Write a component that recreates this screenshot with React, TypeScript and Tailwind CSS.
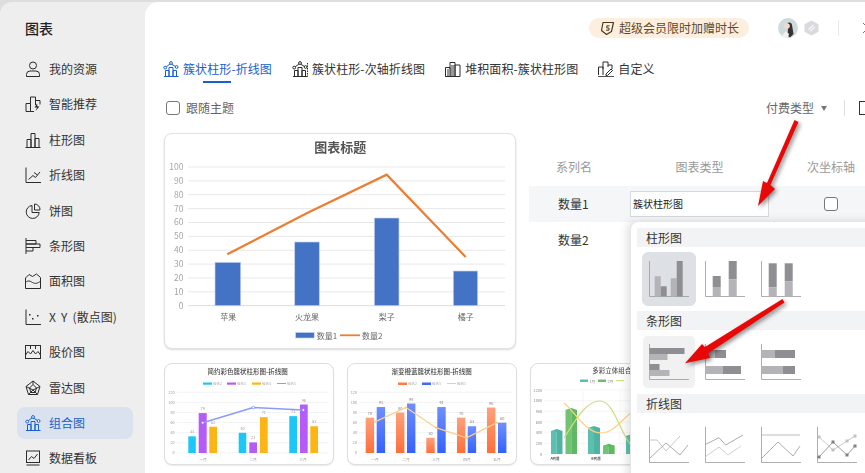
import React from "react";

const FONT = '"Noto Sans CJK SC", "Noto Sans", sans-serif';

function Ic({ children, className = "text-[#2b2b2b]" }: { children: React.ReactNode; className?: string }) {
  return (
    <svg width="16" height="16" viewBox="0 0 16 16" fill="none" stroke="currentColor" strokeWidth="1" className={`shrink-0 ${className}`}>
      {children}
    </svg>
  );
}

const Combo = () => (
  <>
    <path d="M1 15.5H15.5M2.5 15.5V9.5H6V15.5M6 15.5V6.5H10V15.5M10 15.5V9.5H13.5V15.5" />
    <path d="M3 6L7.5 2.5L12.5 5.5" />
    <circle cx="2.2" cy="6.6" r="1.4" fill="white" />
    <circle cx="8" cy="2" r="1.4" fill="white" />
    <circle cx="13.6" cy="6" r="1.4" fill="white" />
  </>
);

const navItems: { label: string; icon: React.ReactNode }[] = [
  { label: "我的资源", icon: <><circle cx="8" cy="4.5" r="3.5" /><path d="M1.5 15.5V13.5A3.5 3.5 0 0 1 5 10H11A3.5 3.5 0 0 1 14.500 13.500V15.500Z" /></> },
  { label: "智能推荐", icon: <><path d="M1 15.500V7.500H5.500V15.500ZM5.500 7.500V1H10.500V9M10.500 4.500H15V8.500" /><path d="M12 7.500L9.500 11.500H12L10.500 15L14.500 10.500H12.500Z" fill="#2b2b2b" stroke="none" /><path d="M5.500 15.500H9" /></> },
  { label: "柱形图", icon: <path d="M0.500 15.500H15.500M2 15.500V7.500H6V15.500M6 15.500V1.500H10V15.500M10 15.500V6.500H14V15.500" /> },
  { label: "折线图", icon: <><path d="M1 0.500V15.500H16" /><path d="M3.500 12.500L8 8.500L10.500 10.500L15 5M9 5.500L12.500 8" /></> },
  { label: "饼图", icon: <><path d="M7 2.500A6.500 6.500 0 1 0 14.200 9.500H7Z" /><path d="M9.500 1A5.500 5.500 0 0 1 15 7H9.500Z" /></> },
  { label: "条形图", icon: <path d="M1 0V16M1 2.500H11V6H1M1 6H15V9.500H1M1 9.500H8V13H1" /> },
  { label: "面积图", icon: <><path d="M0.500 5L4 1.500L7.500 3.500L11.500 1L15.500 4.500V15.500H0.500Z" /><path d="M0.500 9.500C3 7 5 8 7.500 9.500C10 11 13 10.500 15.500 8" /></> },
  { label: "X Y (散点图)", icon: <><path d="M1 0.500V15.500H16" /><rect x="4" y="5" width="1.500" height="1.500" fill="currentColor" stroke="none" /><rect x="7" y="9" width="1.500" height="1.500" fill="currentColor" stroke="none" /><rect x="12" y="6" width="1.500" height="1.500" fill="currentColor" stroke="none" /></> },
  { label: "股价图", icon: <><rect x="0.500" y="1.500" width="15" height="13" /><path d="M5.500 1.500V5M10.500 1.500V5M0.500 11L3 7.500L5.500 10L8 6.500L10.500 10L13 7.500L15.500 11" /></> },
  { label: "雷达图", icon: <path d="M8 1L15 6.500L12.500 14.500H3.500L1 6.500ZM8 4.500L11.500 8L10 12.500H6L4.500 8ZM8 1V4.500M1 6.500L8 10L15 6.500M3.500 14.500L8 10L12.500 14.500" /> },
  { label: "组合图", icon: <Combo /> },
  { label: "数据看板", icon: <><rect x="1.500" y="1" width="13" height="11.500" /><path d="M3.500 10L6.500 6.500L9 8.500L12.500 4M1.500 15H14.500" /></> },
];

function Sidebar() {
  return (
    <aside className="w-[145px] shrink-0 flex flex-col">
      <div className="h-[49.300px] shrink-0 pl-[25px] pt-[16px] text-[14px] leading-[20px] font-medium text-[#222]">图表</div>
      {navItems.map((n) => {
        const active = n.label === "组合图";
        return (
          <div key={n.label} className="h-[35.400px] ml-[17px] mr-[12px] py-[1.700px] shrink-0">
            <div className={`h-full flex items-center gap-[8px] pl-[8px] rounded-[8px] text-[12px] ${active ? "bg-[#d9e2ee] text-[#1a5fd0]" : "text-[#333]"}`}>
              <Ic className={active ? "text-[#1a5fd0]" : "text-[#2b2b2b]"}>{n.icon}</Ic>
              <span className="whitespace-nowrap [word-spacing:2.5px]">{n.label}</span>
            </div>
          </div>
        );
      })}
    </aside>
  );
}

function MainChart() {
  const ys = [100, 90, 80, 70, 60, 50, 40, 30, 20, 10, 0];
  const Y = (v: number) => 172.700 - v * 1.387;
  const bars = [[51, 129.300, 25.700], [130.700, 109, 24.600], [210.300, 85, 24.700], [289.300, 138, 24.400]];
  const cats = [["苹果", 64.300], ["火龙果", 143], ["梨子", 222.700], ["橘子", 301.700]] as const;
  return (
    <svg width="350" height="214" viewBox="1 1 350 214" className="blur-[0.4px]" fontFamily={FONT}>
      <text x="176.300" y="18.500" textAnchor="middle" fontSize="13" fontWeight="700" fill="#555">图表标题</text>
      {ys.map((v) => (
        <g key={v}>
          <line x1="24.300" x2="341" y1={Y(v)} y2={Y(v)} stroke={v === 0 ? "#dcdcdc" : "#e8e8e8"} strokeWidth="1" />
          <text x="19.500" y={Y(v) + 3} textAnchor="end" fontSize="8.500" fill="#a5a5a5">{v}</text>
        </g>
      ))}
      {bars.map(([x, y, w], i) => (
        <rect key={i} x={x} y={y} width={w} height={172.700 - y} fill="#4472c4" stroke="#c4d2ec" strokeWidth="0.700" />
      ))}
      <polyline points="63.300,121.300 142.700,80.300 222.700,41.700 301.700,124" fill="none" stroke="#ed7d31" strokeWidth="2.200" />
      {cats.map(([t, x]) => (
        <text key={t} x={x} y="186.500" textAnchor="middle" fontSize="8" fill="#666">{t}</text>
      ))}
      <rect x="131.700" y="199.500" width="18.500" height="5.500" fill="#4472c4" stroke="#c4d2ec" strokeWidth="0.600" />
      <text x="152.700" y="205.500" fontSize="8" fill="#666">数量1</text>
      <line x1="176" x2="196" y1="202.300" y2="202.300" stroke="#ed7d31" strokeWidth="1.800" />
      <text x="198" y="205.500" fontSize="8" fill="#666">数量2</text>
    </svg>
  );
}

function ThumbAxis({ x1 = 12.700, labels = [120, 100, 80, 60, 40, 20, 0] }: { x1?: number; labels?: number[] }) {
  return (
    <>
      {labels.map((v, i) => {
        const y = 29.300 + i * 10.100;
        return (
          <g key={v}>
            <line x1={x1} x2="165" y1={y} y2={y} stroke="#eeeeee" strokeWidth="0.700" />
            <text x={x1 - 2} y={y + 1.500} textAnchor="end" fontSize="3.800" fill="#999">{v}</text>
          </g>
        );
      })}
    </>
  );
}

const V = (v: number) => 90 - v * 0.505;

function Thumb1() {
  const groups: [number, number, string, number][] = [
    [24.300, 33, "#1cc7f7", 7.500], [34.700, 79, "#b65bf5", 8], [45.300, 52, "#fdb515", 7.700],
    [74.700, 40, "#1cc7f7", 7.600], [85.300, 21, "#b65bf5", 7.700], [96, 71, "#fdb515", 7.700],
    [125.300, 73, "#1cc7f7", 7.700], [136, 96, "#b65bf5", 7.700], [146.300, 53, "#fdb515", 7.700],
  ];
  return (
    <svg width="168" height="100" viewBox="1 1 168 100" className="blur-[0.5px]" fontFamily={FONT}>
      <text x="83.700" y="10.500" textAnchor="middle" fontSize="6.500" fontWeight="500" fill="#444">简约彩色簇状柱形图-折线图</text>
      {[[39, "#1cc7f7", "组合2"], [63, "#b65bf5", "组合3"], [88, "#fdb515", "组合4"]].map(([x, c, t]) => (
        <g key={t as string}>
          <rect x={x as number} y="19.500" width="9" height="2.200" fill={c as string} />
          <text x={(x as number) + 10} y="22" fontSize="3.500" fill="#aaa">{t}</text>
        </g>
      ))}
      <line x1="113" x2="122" y1="20.500" y2="20.500" stroke="#8a9bfb" strokeWidth="1" />
      <text x="123" y="22" fontSize="3.500" fill="#aaa">组合1</text>
      <ThumbAxis />
      {groups.map(([x, v, c, w], i) => (
        <g key={i}>
          <rect x={x} y={V(v)} width={w} height={90 - V(v)} fill={c} />
          <text x={x + w / 2} y={V(v) - 3} textAnchor="middle" fontSize="3.800" fill="#999">{v}</text>
        </g>
      ))}
      <polyline points="38.700,59.700 89.300,44.500 139.300,47" fill="none" stroke="#8a9bfb" strokeWidth="1.500" />
      {[[38.700, 59.700], [89.300, 44.500], [139.300, 47]].map(([x, y], i) => (
        <circle key={i} cx={x} cy={y} r="1.300" fill="white" stroke="#6c80fa" strokeWidth="0.600" />
      ))}
      {[["一月", 39], ["二月", 89], ["三月", 139]].map(([t, x]) => (
        <text key={t as string} x={x as number} y="98" textAnchor="middle" fontSize="3.800" fill="#999">{t}</text>
      ))}
    </svg>
  );
}

function Thumb2() {
  const bars: [number, number, string][] = [
    [18.700, 70, "o"], [29.700, 91, "b"], [49, 80, "o"], [60, 98, "b"], [79.300, 30, "o"],
    [90.300, 91, "b"], [110, 70, "o"], [120.700, 53, "b"], [140, 90, "o"], [151, 60, "b"],
  ];
  const pts = [[28.500, 58.700], [59, 44.500], [89, 64.700], [119.500, 74.800], [150, 59.700]];
  return (
    <svg width="168" height="100" viewBox="1 1 168 100" className="blur-[0.5px]" fontFamily={FONT}>
      <defs>
        <linearGradient id="go" x1="0" y1="0" x2="0" y2="1">
          <stop offset="0" stopColor="#ffa07c" /><stop offset="1" stopColor="#ff6f38" />
        </linearGradient>
        <linearGradient id="gb" x1="0" y1="0" x2="0" y2="1">
          <stop offset="0" stopColor="#6f8fff" /><stop offset="1" stopColor="#3461fb" />
        </linearGradient>
      </defs>
      <text x="84.700" y="10.500" textAnchor="middle" fontSize="6.500" fontWeight="500" fill="#444">渐变橙蓝簇状柱形图-折线图</text>
      <rect x="51" y="19.500" width="9" height="2.500" fill="#ff7a45" />
      <text x="61" y="22" fontSize="3.500" fill="#aaa">组合2</text>
      <rect x="75" y="19.500" width="9" height="2.500" fill="#3f6bfb" />
      <text x="85" y="22" fontSize="3.500" fill="#aaa">组合3</text>
      <line x1="100" x2="109" y1="20.500" y2="20.500" stroke="#fdc97e" strokeWidth="1" />
      <text x="110" y="22" fontSize="3.500" fill="#aaa">组合1</text>
      <ThumbAxis x1={12} />
      {bars.map(([x, v, k], i) => (
        <g key={i}>
          <rect x={x} y={V(v)} width="8.400" height={90 - V(v)} fill={k === "o" ? "url(#go)" : "url(#gb)"} />
          <text x={x + 4.200} y={V(v) - 3} textAnchor="middle" fontSize="3.800" fill="#777">{v}</text>
        </g>
      ))}
      <polyline points={pts.map((p) => p.join(",")).join(" ")} fill="none" stroke="#fdcf8a" strokeWidth="1.300" />
      {pts.map(([x, y], i) => <circle key={i} cx={x} cy={y} r="1.100" fill="#fdc97e" />)}
      {[["一月", 28], ["二月", 59], ["三月", 89], ["四月", 120], ["五月", 150]].map(([t, x]) => (
        <text key={t as string} x={x as number} y="98" textAnchor="middle" fontSize="3.800" fill="#999">{t}</text>
      ))}
    </svg>
  );
}

function Thumb3() {
  const col = (x: number, top: number, w: number, a: string, b: string, i: number) => (
    <g key={i}>
      <path d={`M${x} ${top + 2}L${x + w / 2} ${top}L${x + w} ${top + 2}L${x + w / 2} ${top + 3.500}Z`} fill={b} />
      <rect x={x} y={top + 2} width={w / 2} height={91 - top - 2} fill={a} />
      <rect x={x + w / 2} y={top + 2} width={w / 2} height={91 - top - 2} fill={b} />
    </g>
  );
  return (
    <svg width="168" height="100" viewBox="1 1 168 100" className="blur-[0.5px]" fontFamily={FONT}>
      <text x="85" y="10" textAnchor="middle" fontSize="6.500" fontWeight="500" fill="#555">多彩立体组合图</text>
      <rect x="50" y="16.500" width="8" height="2.500" fill="#5cc0b0" />
      <text x="59.500" y="19.500" fontSize="3.800" fill="#888">1月</text>
      <rect x="68" y="16.500" width="8" height="2.500" fill="#6cc06c" />
      <text x="77.500" y="19.500" fontSize="3.800" fill="#888">2月</text>
      <line x1="86" x2="94" y1="17.700" y2="17.700" stroke="#c9d860" strokeWidth="1" />
      {[1200, 1000, 800, 600, 400, 200, 0].map((v, i) => {
        const y = 27 + i * 10.670;
        return (
          <g key={v}>
            <line x1="14" x2="168" y1={y} y2={y} stroke="#f0f0f0" strokeWidth="0.600" />
            <text x="12" y={y + 1.500} textAnchor="end" fontSize="3.800" fill="#888">{v}</text>
          </g>
        );
      })}
      <line x1="53" x2="53" y1="27" y2="91" stroke="#eeeeee" strokeWidth="0.500" />
      <line x1="90" x2="90" y1="27" y2="91" stroke="#eeeeee" strokeWidth="0.500" />
      {col(21, 66, 11.500, "#5cc0b0", "#4fb3a3", 1)}
      {col(35.500, 45, 11.500, "#70c474", "#5fb864", 2)}
      {col(58, 63, 12, "#5cc0b0", "#4fb3a3", 3)}
      {col(73, 80.700, 11.700, "#70c474", "#5fb864", 4)}
      {col(96, 71, 12, "#5cc0b0", "#4fb3a3", 5)}
      <path d="M34 75C44 60 55 38 70 38C84 38 90 70 101 82" fill="none" stroke="#cfdc7e" strokeWidth="1.200" />
      <path d="M34 40C46 50 56 70 71 70C84 70 92 56 101 50" fill="none" stroke="#fcd27f" strokeWidth="1.200" />
      <text x="25" y="97" textAnchor="middle" fontSize="3.500" fontWeight="700" fill="#666">A鸭居</text>
      <text x="66" y="97" textAnchor="middle" fontSize="3.500" fontWeight="700" fill="#666">B鸭居</text>
    </svg>
  );
}

const L = "#b3b3b8";
const D = "#8e8e93";
const Ax = () => <path d="M0.500 0V35.500H40" fill="none" stroke="#9a9a9e" strokeWidth="0.800" />;

function Mini({ children }: { children: React.ReactNode }) {
  return (
    <svg width="40" height="36" viewBox="0 0 40 36" className="shrink-0">
      {children}
    </svg>
  );
}

const R = ({ x, y, w, h, c }: { x: number; y: number; w: number; h: number; c: string }) => <rect x={x} y={y} width={w} height={h} fill={c} />;

const colIcons = [
  <><Ax /><R x={5.700} y={15.300} w={6} h={20} c={L} /><R x={11.700} y={25.300} w={6} h={10} c={D} /><R x={21.700} y={17.300} w={6} h={18} c={L} /><R x={27.700} y={0} w={6} h={35.500} c={D} /></>,
  <><Ax /><R x={7.700} y={15} w={8} h={11} c={D} /><R x={7.700} y={26} w={8} h={9.500} c={L} /><R x={23.700} y={0} w={8} h={18.300} c={D} /><R x={23.700} y={18.300} w={8} h={17.200} c={L} /></>,
  <><Ax /><R x={7.700} y={2.300} w={8} h={24} c={D} /><R x={7.700} y={26.300} w={8} h={9.200} c={L} /><R x={23.700} y={2.300} w={8} h={18} c={D} /><R x={23.700} y={20.300} w={8} h={15.200} c={L} /></>,
];
const barIcons = [
  <><Ax /><R x={0.500} y={4} w={35} h={6} c={D} /><R x={0.500} y={10} w={18} h={6} c={L} /><R x={0.500} y={20} w={10} h={6} c={D} /><R x={0.500} y={26} w={20} h={6} c={L} /></>,
  <><Ax /><R x={0.500} y={6} w={9.500} h={8} c={L} /><R x={10} y={6} w={11} h={8} c={D} /><R x={0.500} y={22} w={17.500} h={8} c={L} /><R x={18} y={22} w={18} h={8} c={D} /></>,
  <><Ax /><R x={0.500} y={6} w={13.500} h={8} c={L} /><R x={14} y={6} w={20} h={8} c={D} /><R x={0.500} y={22} w={21.500} h={8} c={L} /><R x={22} y={22} w={12} h={8} c={D} /></>,
];
const lineIcons = [
  <><Ax /><polyline points="0,13 8,13 17,24 31,9" fill="none" stroke="#c2c2c6" strokeWidth="0.900" /><polyline points="0,32 17,16 31,28 39,18" fill="none" stroke="#a3a3a7" strokeWidth="0.900" /></>,
  <><Ax /><polyline points="0,17.700 14,10.700 20.700,18 38,8" fill="none" stroke="#a3a3a7" strokeWidth="0.900" /><polyline points="0,30 14,20 23,28 36,19" fill="none" stroke="#c9c9cc" strokeWidth="0.900" /></>,
  <><Ax /><line x1="0" x2="39" y1="8" y2="8" stroke="#b3b3b8" strokeWidth="0.900" /><polyline points="0,32 17,15 32,29 39,19" fill="none" stroke="#a3a3a7" strokeWidth="0.900" /></>,
  <><Ax /><polyline points="2,10 16,23 30,14 38,9" fill="none" stroke="#c2c2c6" strokeWidth="0.900" /><polyline points="2,30 16,15 30,28 38,19" fill="none" stroke="#929296" strokeWidth="0.900" />
    {[[2, 10], [16, 23], [30, 14], [38, 9]].map(([x, y], i) => <rect key={i} x={x - 1.500} y={y - 1.500} width="3" height="3" fill="#c2c2c6" />)}
    {[[2, 30], [16, 15], [30, 28], [38, 19]].map(([x, y], i) => <rect key={i} x={x - 1.500} y={y - 1.500} width="3" height="3" fill="#818185" />)}
  </>,
];

function Section({ title, icons, selected, hover }: { title: string; icons: React.ReactNode[]; selected?: number; hover?: number }) {
  return (
    <div>
      <div className="h-[19px] bg-[#f2f3f5] pl-[9px] text-[12px] leading-[19px] text-[#333]">{title}</div>
      <div className="flex gap-[2px] pl-[5px] pt-[5px] pb-[5px]">
        {icons.map((ic, i) => (
          <div
            key={i}
            className={`w-[54px] h-[54px] shrink-0 flex items-center justify-center rounded-[6px] border ${i === selected ? "bg-[#dde1e5] border-[#dde1e5]" : i === hover ? "bg-[#f1f1f1] border-white" : "border-white"}`}
          >
            <Mini>{ic}</Mini>
          </div>
        ))}
      </div>
    </div>
  );
}

function Dropdown() {
  return (
    <div className="absolute left-[485px] top-[219px] w-[260px] h-[260px] bg-white rounded-tl-[8px] border-l border-t border-[#e3e5e8] shadow-[-3px_0_8px_rgba(0,0,0,0.12)] pl-[6px] pt-[6px]">
      <Section title="柱形图" icons={colIcons} selected={0} />
      <Section title="条形图" icons={barIcons} hover={0} />
      <Section title="折线图" icons={lineIcons} />
    </div>
  );
}

function Checkbox() {
  return <span className="block w-[14px] h-[14px] rounded-[3px] border border-[#777] bg-white shrink-0" />;
}

function Tab({ label, icon, active }: { label: string; icon: React.ReactNode; active?: boolean }) {
  return (
    <div className={`relative flex items-center gap-[4px] h-[20px] shrink-0 text-[12px] tracking-[0.1px] whitespace-nowrap ${active ? "text-[#1a5fd0]" : "text-[#333]"}`}>
      <Ic className={active ? "text-[#1a5fd0]" : "text-[#2b2b2b]"}>{icon}</Ic>
      <span>{label}</span>
      {active && <span className="absolute left-[40px] top-[22px] w-[28px] h-[2px] bg-[#1a5fd0]" />}
    </div>
  );
}

function Arrows() {
  return (
    <svg width="865" height="473" className="absolute left-0 top-0 pointer-events-none drop-shadow-[2px_2px_2px_rgba(0,0,0,0.45)]">
      <polygon points="794.500,120 798.500,122 770.500,185 775,189 758,206 763,181 767,183" fill="#e80808" />
      <polygon points="782.500,299 784.500,302.500 708.300,353.300 710,358 685,363.300 702,344 705,347" fill="#e80808" />
    </svg>
  );
}

export default function App() {
  return (
    <div className="relative w-[865px] h-[473px] overflow-hidden bg-[#dedede] pt-[2px]" style={{ fontFamily: FONT }}>
      <div className="flex h-[471px] rounded-tl-[12px] bg-[#eeeeee] overflow-hidden">
        <Sidebar />
        <main className="relative flex-1 min-w-0 bg-white rounded-tl-[14px] overflow-hidden">
          <div className="flex items-center h-[20px] mt-[16px] pl-[444px]">
            <div className="flex items-center w-[160px] h-[20px] rounded-full bg-[#fdeedd] pl-[11px] gap-[4px] shrink-0 text-[12px] text-[#5d4a2c] whitespace-nowrap">
              <svg width="15" height="15" viewBox="0 0 15 15" fill="none" stroke="#4a3b22" strokeWidth="1.200" className="shrink-0">
                <path d="M3 1.500H13.500L11.500 10.500L6.500 13.500L1.500 9.500Z" strokeLinejoin="round" />
                <path d="M9.500 4.800H6.800V7H9V9.200H6" strokeWidth="1" />
              </svg>
              <span>超级会员限时加赠时长</span>
            </div>
            <svg width="20" height="20" viewBox="0 0 20 20" className="ml-[29px] shrink-0">
              <circle cx="10" cy="10" r="10" fill="#cfdadd" />
              <path d="M9 6C10 3.500 14 4 14 7L15.500 16L12 19.500L8 17C11 14 10 10 9 6Z" fill="#39312f" />
              <circle cx="9" cy="8" r="2.800" fill="#f0dccf" />
              <path d="M3 19L8 13L11 16L10 20Z" fill="#f2f2f2" />
            </svg>
            <svg width="15" height="16" viewBox="0 0 15 16" className="ml-[6px] shrink-0">
              <path d="M7.500 0.500L14.500 4.200V11.800L7.500 15.500L0.500 11.800V4.200Z" fill="#d9d9de" />
              <path d="M4.500 9.500L9.500 5M6 11L11 7" stroke="#f4f4f6" strokeWidth="1.500" />
            </svg>
            <span className="ml-[19px] w-px h-[16px] bg-[#e8e8e8] shrink-0" />
            <svg width="12" height="12" viewBox="0 0 12 12" className="ml-[23px] shrink-0" stroke="#777" strokeWidth="1">
              <path d="M1 1L11 11M11 1L1 11" />
            </svg>
          </div>

          <div className="flex gap-[20px] pl-[18px] mt-[21px]">
            <Tab active label="簇状柱形-折线图" icon={<Combo />} />
            <Tab label="簇状柱形-次轴折线图" icon={<><Combo /><path d="M15.500 2V15.500" strokeDasharray="1.500 1" /></>} />
            <Tab label="堆积面积-簇状柱形图" icon={<><path d="M0.500 15.500V6.500H5V15.500M5 15.500V1.500H10V15.500M10 15.500V4H15V15.500H0.500Z" /><rect x="2" y="8" width="3" height="7" fill="#999" stroke="none" /><rect x="6" y="4" width="3" height="11" fill="#999" stroke="none" /></>} />
            <Tab label="自定义" icon={<><path d="M0.500 14V6H5V14M5 8V1H10V6M10 4H14V8" /><path d="M8 13L13 8L14.500 9.500L9.500 14.500H8Z" /><path d="M0 15.700H16" /></>} />
          </div>

          <div className="flex items-center h-[14px] mt-[22px] pl-[21px] w-[740px]">
            <Checkbox />
            <span className="ml-[6px] text-[12px] text-[#666] whitespace-nowrap">跟随主题</span>
            <span className="ml-[532px] text-[12px] text-[#666] whitespace-nowrap">付费类型</span>
            <span className="ml-[7px] w-0 h-0 border-x-[3.500px] border-x-transparent border-t-[5px] border-t-[#777] shrink-0" />
            <span className="ml-[17px] w-px h-[16px] bg-[#dddddd] shrink-0" />
            <span className="ml-[14px] w-[14px] h-[14px] border border-[#333] shrink-0" />
          </div>

          <div className="flex items-start mt-[18px] pl-[19px]">
            <div className="w-[352px] h-[216px] shrink-0 rounded-[8px] border border-[#e3e3e3] bg-white shadow-[0_1px_2px_rgba(0,0,0,0.15)] overflow-hidden">
              <MainChart />
            </div>
            <div className="ml-[13px] w-[364px] shrink-0">
              <div className="grid grid-cols-[101px_139px_124px] h-[53px] pt-[25px] text-[12px] leading-[18px] text-[#999]">
                <span className="pl-[27px]">系列名</span>
                <span className="text-center">图表类型</span>
                <span className="text-center">次坐标轴</span>
              </div>
              <div className="grid grid-cols-[101px_139px_124px] h-[36px] items-center bg-[#f5f6f8] text-[12px] text-[#333]">
                <span className="pl-[29px]">数量1</span>
                <div className="h-[26px] border border-[#d5d8dc] bg-white pl-[2px] text-[10px] leading-[24px] text-[#222]">簇状柱形图</div>
                <span className="flex justify-center"><Checkbox /></span>
              </div>
              <div className="h-[36px] flex items-center pl-[29px] text-[12px] text-[#333]">数量2</div>
            </div>
          </div>

          <div className="flex gap-[13px] mt-[14px] pl-[19px]">
            {[<Thumb1 key="1" />, <Thumb2 key="2" />, <Thumb3 key="3" />].map((t, i) => (
              <div key={i} className="w-[170px] h-[102px] shrink-0 rounded-[8px] border border-[#dedede] bg-white shadow-[0_1px_1px_rgba(0,0,0,0.08)] overflow-hidden">
                {t}
              </div>
            ))}
          </div>

          <Dropdown />
        </main>
      </div>
      <Arrows />
    </div>
  );
}
